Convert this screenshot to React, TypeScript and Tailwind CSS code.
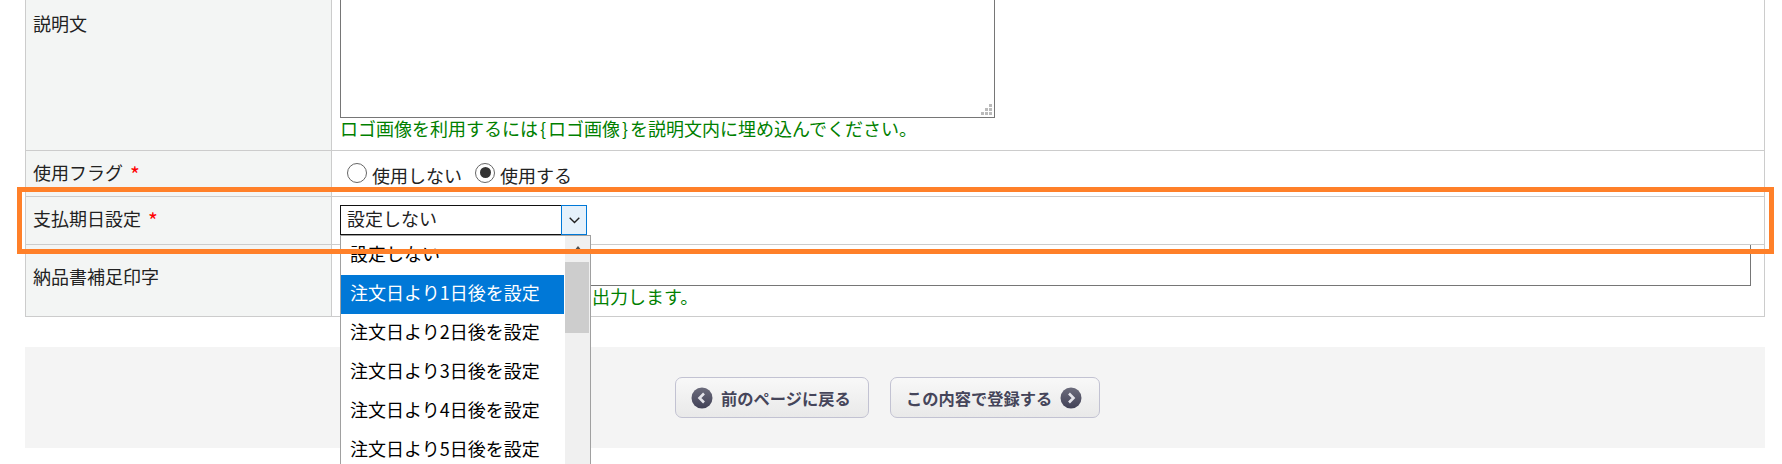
import React from "react";

const options = [
  "設定しない",
  "注文日より1日後を設定",
  "注文日より2日後を設定",
  "注文日より3日後を設定",
  "注文日より4日後を設定",
  "注文日より5日後を設定",
];

const Required = () => <span className="ml-[7px] align-[-3px] text-[21px] leading-[0] text-[#ff0000]">*</span>;

const Radio = ({ label, checked }: { label: string; checked?: boolean }) => (
  <label className="flex items-center">
    <span className="flex h-5 w-5 items-center justify-center rounded-full border border-[#666] bg-white">
      {checked && <span className="h-[11px] w-[11px] rounded-full bg-[#333]" />}
    </span>
    <span className="ml-[5px] mt-1">{label}</span>
  </label>
);

const Row = ({
  label,
  required,
  rowClass,
  labelClass,
  children,
}: {
  label: string;
  required?: boolean;
  rowClass: string;
  labelClass: string;
  children: React.ReactNode;
}) => (
  <div className={`flex border-[#ccc] ${rowClass}`}>
    <div className={`w-[306px] shrink-0 border-r border-[#ccc] bg-[#f3f5f4] pl-[7px] ${labelClass}`}>
      <span>
        {label}
        {required && <Required />}
      </span>
    </div>
    <div className="min-w-0 flex-1 pl-2">{children}</div>
  </div>
);

const ArrowIcon = ({ right }: { right?: boolean }) => (
  <svg width="22" height="22" viewBox="0 0 22 22" className="shrink-0">
    <defs>
      <linearGradient id={right ? "arrowR" : "arrowL"} x1="0" y1="0" x2="0" y2="1">
        <stop offset="0" stopColor="#6c6c7c" />
        <stop offset="1" stopColor="#414156" />
      </linearGradient>
    </defs>
    <circle cx="11" cy="11" r="10.5" fill={`url(#${right ? "arrowR" : "arrowL"})`} />
    <path
      d={right ? "M9 6.5l4.5 4.5L9 15.5" : "M13 6.5L8.5 11l4.5 4.5"}
      fill="none"
      stroke="#e4e4ea"
      strokeWidth="2.6"
    />
  </svg>
);

const NavButton = ({ children, className }: { children: React.ReactNode; className: string }) => (
  <button
    className={`flex h-[41px] items-center rounded-[7px] border border-[#c2c2d2] bg-gradient-to-b from-[#f8f8f8] to-[#e9e9e9] pl-[15px] text-[16.25px] font-bold text-[#45455a] ${className}`}
  >
    {children}
  </button>
);

const Grip = () => (
  <svg width="11" height="11" viewBox="0 0 11 11" className="absolute bottom-[2px] right-[2px]" fill="#bbb">
    <rect x="8" y="0" width="3" height="3" />
    <rect x="4" y="4" width="3" height="3" />
    <rect x="8" y="4" width="3" height="3" />
    <rect x="0" y="8" width="3" height="3" />
    <rect x="4" y="8" width="3" height="3" />
    <rect x="8" y="8" width="3" height="3" />
  </svg>
);

export default function App() {
  return (
    <div
      className="relative h-[464px] overflow-hidden bg-white text-[18px] leading-[26px] text-[#222]"
      style={{ fontFamily: '"Noto Sans CJK JP", "Noto Sans", sans-serif' }}
    >
      <div className="mx-[25px] w-[1740px] border-x border-b border-[#ccc]">
        <Row label="説明文" rowClass="h-[151px] border-b" labelClass="pt-[10px]">
          <div className="relative h-[118px] w-[655px] border-x border-b border-[#767676]">
            <Grip />
          </div>
          <p className="-mt-[3px] text-[#008000]">
            ロゴ画像を利用するには<span className="inline-block w-[10px] text-center">{"{"}</span>ロゴ画像
            <span className="inline-block w-[10px] text-center">{"}"}</span>を説明文内に埋め込んでください。
          </p>
        </Row>
        <Row label="使用フラグ" required rowClass="h-[46px] border-b" labelClass="flex items-center pb-[4px]">
          <div className="flex h-full items-center gap-[13px] pb-[2px] pl-[7px]">
            <Radio label="使用しない" />
            <Radio label="使用する" checked />
          </div>
        </Row>
        <Row label="支払期日設定" required rowClass="h-[48px] border-b" labelClass="flex items-center pb-[6px]">
          <div className="relative z-10 mt-2 h-[30px] w-[247px]">
            <div className="flex h-full items-stretch border border-[#111]">
              <span className="flex-1 pl-[6px] leading-[24px]">設定しない</span>
              <span className="-my-px -mr-px flex w-[26px] items-center justify-center border border-[#0078d7] bg-[#e5f1fb]">
                <svg width="11" height="7" viewBox="0 0 11 7">
                  <path d="M.7.7l4.8 4.8L10.3.7" fill="none" stroke="#222" strokeWidth="1.4" />
                </svg>
              </span>
            </div>
            <div className="absolute left-0 top-[30px] h-[260px] w-[251px] overflow-hidden border border-[#a0a0a0] bg-white">
              <div className="flex">
                <ul className="w-[223px]">
                  {options.map((o, i) => (
                    <li
                      key={o}
                      className={`flex h-[39px] items-center pb-[5px] pl-[9px] ${i === 1 ? "bg-[#0078d7] text-white" : "text-black"}`}
                    >
                      {o}
                    </li>
                  ))}
                </ul>
                <div className="ml-[1px] h-[260px] flex-1 bg-[#f0f0f0]">
                  <div className="flex h-[26px] items-start justify-center pt-[10px]">
                    <span className="h-0 w-0 border-x-[4px] border-b-[5px] border-x-transparent border-b-[#505050]" />
                  </div>
                  <div className="mr-[1px] h-[71px] bg-[#cdcdcd]" />
                </div>
              </div>
            </div>
          </div>
        </Row>
        <Row label="納品書補足印字" rowClass="h-[71px]" labelClass="pt-[18px]">
          <div className="h-[41px] w-[1411px] border-x border-b border-[#767676]" />
          <p className="-mt-[3px] text-[#008000]">ここに入力した内容を納品書に出力します。</p>
        </Row>
      </div>

      <div className="mx-[25px] mt-[30px] flex h-[101px] w-[1740px] items-start justify-center gap-[21px] bg-[#f4f4f4] pr-[15px] pt-[30px]">
        <NavButton className="w-[194px]">
          <ArrowIcon />
          <span className="ml-[8px]">前のページに戻る</span>
        </NavButton>
        <NavButton className="w-[210px]">
          <span className="mr-[8px]">この内容で登録する</span>
          <ArrowIcon right />
        </NavButton>
      </div>

      {/* callout */}
      <div className="pointer-events-none absolute left-[17px] top-[187px] z-20 h-[67px] w-[1757px] border-[5px] border-[#ff8029]" />
    </div>
  );
}
